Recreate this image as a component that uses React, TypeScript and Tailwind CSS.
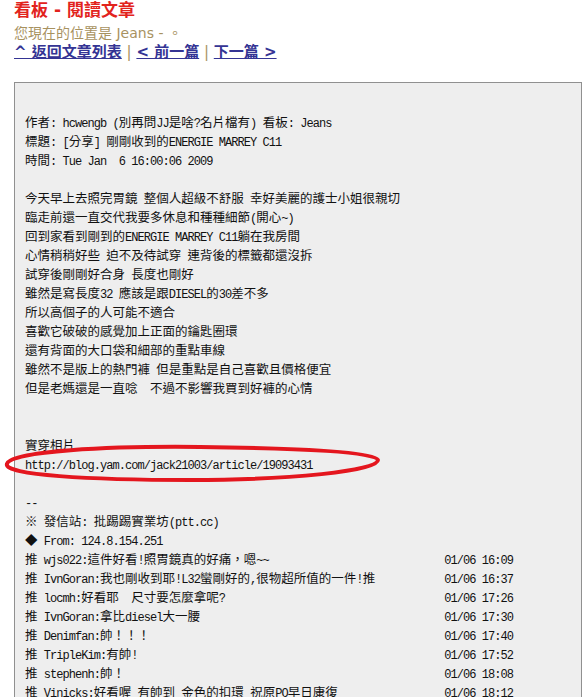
import React from 'react';

const header = [
  '作者: hcwengb (別再問JJ是啥?名片檔有) 看板: Jeans',
  '標題: [分享] 剛剛收到的ENERGIE MARREY C11',
  '時間: Tue Jan  6 16:00:06 2009',
  '',
  '今天早上去照完胃鏡 整個人超級不舒服 幸好美麗的護士小姐很親切',
  '臨走前還一直交代我要多休息和種種細節(開心~)',
  '回到家看到剛到的ENERGIE MARREY C11躺在我房間',
  '心情稍稍好些 迫不及待試穿 連背後的標籤都還沒拆',
  '試穿後剛剛好合身 長度也剛好',
  '雖然是寫長度32 應該是跟DIESEL的30差不多',
  '所以高個子的人可能不適合',
  '喜歡它破破的感覺加上正面的鑰匙圈環',
  '還有背面的大口袋和細部的重點車線',
  '雖然不是版上的熱門褲 但是重點是自己喜歡且價格便宜',
  '但是老媽還是一直唸  不過不影響我買到好褲的心情',
  '',
  '',
  '實穿相片',
  'http://blog.yam.com/jack21003/article/19093431',
  '',
  '--',
  '※ 發信站: 批踢踢實業坊(ptt.cc)',
  '◆ From: 124.8.154.251',
];

const pushes = [
  { text: '推 wjs022:這件好看!照胃鏡真的好痛，嗯~~', time: '01/06 16:09' },
  { text: '推 IvnGoran:我也剛收到耶!L32蠻剛好的,很物超所值的一件!推', time: '01/06 16:37' },
  { text: '推 locmh:好看耶  尺寸要怎麼拿呢?', time: '01/06 17:26' },
  { text: '推 IvnGoran:拿比diesel大一腰', time: '01/06 17:30' },
  { text: '推 Denimfan:帥！！！', time: '01/06 17:40' },
  { text: '推 TripleKim:有帥!', time: '01/06 17:52' },
  { text: '推 stephenh:帥！', time: '01/06 18:08' },
  { text: '推 Vinicks:好看喔 有帥到 金色的扣環 祝原PO早日康復', time: '01/06 18:12' },
];

// half-width ascii runs get a narrow mono face, the rest stays full width
const Bbs = ({ text }: { text: string }) => {
  const parts = text.split(/([\x20-\x7E]+)/).filter((p) => p !== '');
  return (
    <>
      {parts.map((p, i) =>
        /^[\x20-\x7E]+$/.test(p) ? (
          <span key={i} className="font-['Liberation_Mono',monospace] text-[12px] tracking-[-0.95px]">
            {p}
          </span>
        ) : (
          <span key={i} className="font-['Noto_Sans_CJK_TC',sans-serif] text-[12.5px]">
            {p}
          </span>
        )
      )}
    </>
  );
};

const App = () => {
  return (
    <div className="relative h-[697px] overflow-hidden bg-white font-['DejaVu_Sans','Noto_Sans_CJK_TC',sans-serif]">
      <div className="pl-[14px]">
        <h1 className="text-[17px] font-bold leading-[20px] text-[#e2231d]">看板 - 閱讀文章</h1>
        <p className="mt-[4px] text-[14px] leading-[18px] text-[#a8925f]">您現在的位置是 Jeans - 。</p>
        <div className="mt-[1px] text-[15px] font-bold leading-[18px] text-[#a8925f]">
          <a className="text-[#343494] underline">^ 返回文章列表</a>
          <span className="font-normal"> | </span>
          <a className="text-[#343494] underline">&lt; 前一篇</a>
          <span className="font-normal"> | </span>
          <a className="text-[#343494] underline">下一篇 &gt;</a>
        </div>

        {/* article body */}
        <div className="mt-[21px] w-[568px] border border-[#909090] bg-[#eeeeee] px-[10px] pt-[29px] pb-[40px] text-[#111]">
          {header.map((line, i) => (
            <div key={i} className="h-[19px] leading-[19px] whitespace-pre">
              <Bbs text={line} />
            </div>
          ))}
          {pushes.map((p, i) => (
            <div key={i} className="flex h-[19px] w-[488px] justify-between leading-[19px] whitespace-pre">
              <span>
                <Bbs text={p.text} />
              </span>
              <span>
                <Bbs text={p.time} />
              </span>
            </div>
          ))}
        </div>
      </div>

      {/* hand drawn red circle over the link */}
      <svg className="absolute left-0 top-[438px]" width="390" height="50" viewBox="0 0 390 50">
        <path
          d="M7 26 C 9 13, 110 8, 200 9 C 300 10, 378 14, 378 22 C 378 33, 290 42, 190 42 C 90 42, 3 37, 7 26 Z"
          fill="none"
          stroke="#e4161e"
          strokeWidth="4"
        />
      </svg>
    </div>
  );
};

export default App;
